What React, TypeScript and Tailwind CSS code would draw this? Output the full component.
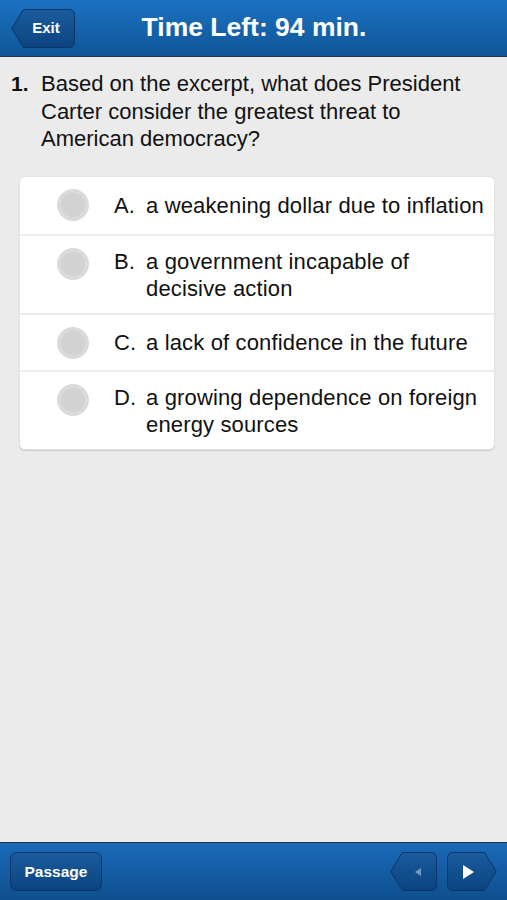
import React from 'react';

const choices = [
  { letter: 'A.', text: 'a weakening dollar due to inflation' },
  { letter: 'B.', text: 'a government incapable of decisive action' },
  { letter: 'C.', text: 'a lack of confidence in the future' },
  { letter: 'D.', text: 'a growing dependence on foreign energy sources' },
];

function ShapeButton({ width, point, children }: { width: number; point: 'left' | 'right' | 'none'; children: React.ReactNode }) {
  const h = 39;
  const w = width;
  let d = '';
  if (point === 'left') {
    d = `M12.5 0.5 H${w - 6.5} Q${w - 0.5} 0.5 ${w - 0.5} 6.5 V${h - 6.5} Q${w - 0.5} ${h - 0.5} ${w - 6.5} ${h - 0.5} H12.5 L0.8 ${h / 2} Z`;
  } else if (point === 'right') {
    d = `M6.5 0.5 H${w - 12.5} L${w - 0.8} ${h / 2} L${w - 12.5} ${h - 0.5} H6.5 Q0.5 ${h - 0.5} 0.5 ${h - 6.5} V6.5 Q0.5 0.5 6.5 0.5 Z`;
  } else {
    d = `M7.5 0.5 H${w - 7.5} Q${w - 0.5} 0.5 ${w - 0.5} 7.5 V${h - 7.5} Q${w - 0.5} ${h - 0.5} ${w - 7.5} ${h - 0.5} H7.5 Q0.5 ${h - 0.5} 0.5 ${h - 7.5} V7.5 Q0.5 0.5 7.5 0.5 Z`;
  }
  return (
    <button className="relative flex items-center justify-center h-[39px] text-white font-bold" style={{ width: w }}>
      <svg className="absolute inset-0" width={w} height={h} viewBox={`0 0 ${w} ${h}`}>
        <defs>
          <linearGradient id={`g-${point}-${w}`} x1="0" y1="0" x2="0" y2="1">
            <stop offset="0" stopColor="#1a5c9e" />
            <stop offset="1" stopColor="#0c4380" />
          </linearGradient>
        </defs>
        <path d={d} fill={`url(#g-${point}-${w})`} stroke="#0a3566" strokeWidth="1" />
      </svg>
      <span className="relative flex items-center">{children}</span>
    </button>
  );
}

export default function App() {
  return (
    <div
      className="w-[507px] h-[900px] flex flex-col bg-[#ebebeb] text-[#111]"
      style={{ fontFamily: '"Liberation Sans", Arial, sans-serif' }}
    >
      {/* Header */}
      <div className="h-[57px] shrink-0 bg-gradient-to-b from-[#1c72c2] to-[#0f5597] border-b border-[#2a3440] flex items-center pl-[11px] relative">
        <ShapeButton width={64} point="left">
          <span className="text-[15px] pl-[6px]">Exit</span>
        </ShapeButton>
        <div className="absolute inset-x-0 top-0 h-[56px] flex items-center justify-center pointer-events-none">
          <span className="text-white font-bold text-[26.5px] pl-[1px]">Time Left: 94 min.</span>
        </div>
      </div>

      {/* Content */}
      <div className="flex-1 overflow-hidden">
        <div className="flex pt-[13px] pl-[11px] pr-[20px]">
          <span className="w-[30px] shrink-0 font-bold text-[21px] leading-[27.5px]">1.</span>
          <p className="text-[22px] leading-[27.5px]">
            Based on the excerpt, what does President Carter consider the greatest threat to American democracy?
          </p>
        </div>

        <div className="ml-[19px] mt-[23px] w-[476px] bg-white rounded-[6px] shadow-[0_1px_1px_rgba(0,0,0,0.14)] border border-[#e4e4e4]">
          {choices.map((c, i) => (
            <div
              key={c.letter}
              className={`flex items-center min-h-[57px] pt-[12px] pb-[11px] ${i > 0 ? 'border-t-2 border-[#ececec]' : ''}`}
            >
              <div className="self-start w-[94px] shrink-0 pl-[37px]">
                <div className="w-[32px] h-[32px] rounded-full bg-[#dadada] flex items-center justify-center">
                  <div className="w-[24px] h-[24px] rounded-full bg-[#d2d2d2]" />
                </div>
              </div>
              <div className="flex">
                <span className="w-[32px] shrink-0 text-[22px] leading-[27px]">{c.letter}</span>
                <span className="text-[22px] leading-[27px] pr-[4px] tracking-[0.15px]">{c.text}</span>
              </div>
            </div>
          ))}
        </div>
      </div>

      {/* Footer */}
      <div className="h-[58px] shrink-0 border-t border-[#2a3440] bg-gradient-to-b from-[#1a6ab8] to-[#0e4f8f] flex items-center justify-between pl-[10px] pr-[10px]">
        <ShapeButton width={92} point="none">
          <span className="text-[15.5px]">Passage</span>
        </ShapeButton>
        <div className="flex items-center gap-[10px]">
          <ShapeButton width={47} point="left">
            <span className="pl-[8px] flex">
              <svg width="10" height="10" viewBox="0 0 10 10">
                <path d="M8 1 L2 5 L8 9 Z" fill="#6f9cc8" />
              </svg>
            </span>
          </ShapeButton>
          <ShapeButton width={50} point="right">
            <span className="pr-[8px] flex">
              <svg width="14" height="16" viewBox="0 0 14 16">
                <path d="M2 1 L13 8 L2 15 Z" fill="#ffffff" />
              </svg>
            </span>
          </ShapeButton>
        </div>
      </div>
    </div>
  );
}
